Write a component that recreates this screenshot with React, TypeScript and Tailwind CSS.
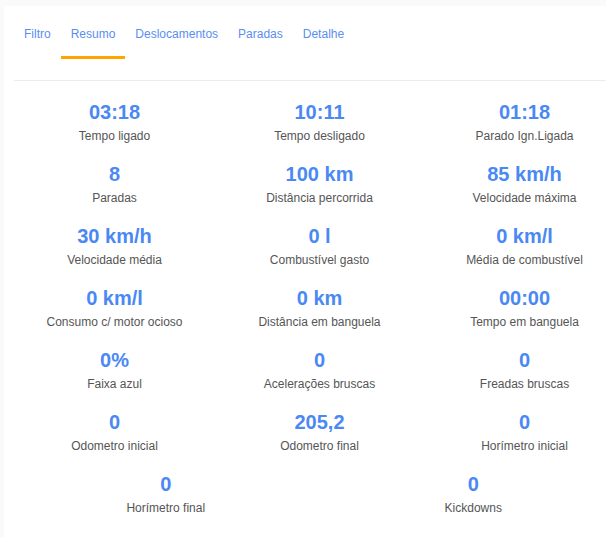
import { useState } from "react";

const TABS = ["Filtro", "Resumo", "Deslocamentos", "Paradas", "Detalhe"];

const STATS: { value: string; label: string }[] = [
  { value: "03:18", label: "Tempo ligado" },
  { value: "10:11", label: "Tempo desligado" },
  { value: "01:18", label: "Parado Ign.Ligada" },
  { value: "8", label: "Paradas" },
  { value: "100 km", label: "Distância percorrida" },
  { value: "85 km/h", label: "Velocidade máxima" },
  { value: "30 km/h", label: "Velocidade média" },
  { value: "0 l", label: "Combustível gasto" },
  { value: "0 km/l", label: "Média de combustível" },
  { value: "0 km/l", label: "Consumo c/ motor ocioso" },
  { value: "0 km", label: "Distância em banguela" },
  { value: "00:00", label: "Tempo em banguela" },
  { value: "0%", label: "Faixa azul" },
  { value: "0", label: "Acelerações bruscas" },
  { value: "0", label: "Freadas bruscas" },
  { value: "0", label: "Odometro inicial" },
  { value: "205,2", label: "Odometro final" },
  { value: "0", label: "Horímetro inicial" },
  { value: "0", label: "Horímetro final" },
  { value: "0", label: "Kickdowns" },
];

export default function App() {
  const [active, setActive] = useState(1);

  return (
    <div
      className="w-[606px] h-[537px] overflow-hidden bg-[#fafafa] pl-[4px] pt-[6px]"
      style={{ fontFamily: '"Liberation Sans", Arial, sans-serif' }}
    >
      <div className="w-[640px] h-[600px] bg-white">
        {/* Tabs */}
        <div className="px-[10px] pt-[8px]">
          <div className="flex">
            {TABS.map((t, i) => (
              <button
                key={t}
                onClick={() => setActive(i)}
                className={`px-[10px] pt-[13px] pb-[15px] text-[12px] leading-[14px] text-[#5a8ef2] border-b-[3px] ${
                  i === active ? "border-[#ffa500]" : "border-transparent"
                }`}
              >
                {t}
              </button>
            ))}
          </div>
          <div className="mt-[21px] h-px bg-[#ececec]" />
        </div>

        {/* Stats */}
        <div className="ml-[8px] w-[615px] pt-[19px] flex flex-wrap">
          {STATS.map((s, i) => (
            <div key={i} className="basis-1/3 grow flex flex-col items-center mb-[18px]">
              <div className="text-[20px] leading-[24px] font-bold text-[#4a89f3]">{s.value}</div>
              <div className="mt-[4px] text-[12px] leading-[16px] text-[#555555]">{s.label}</div>
            </div>
          ))}
        </div>
      </div>
    </div>
  );
}
